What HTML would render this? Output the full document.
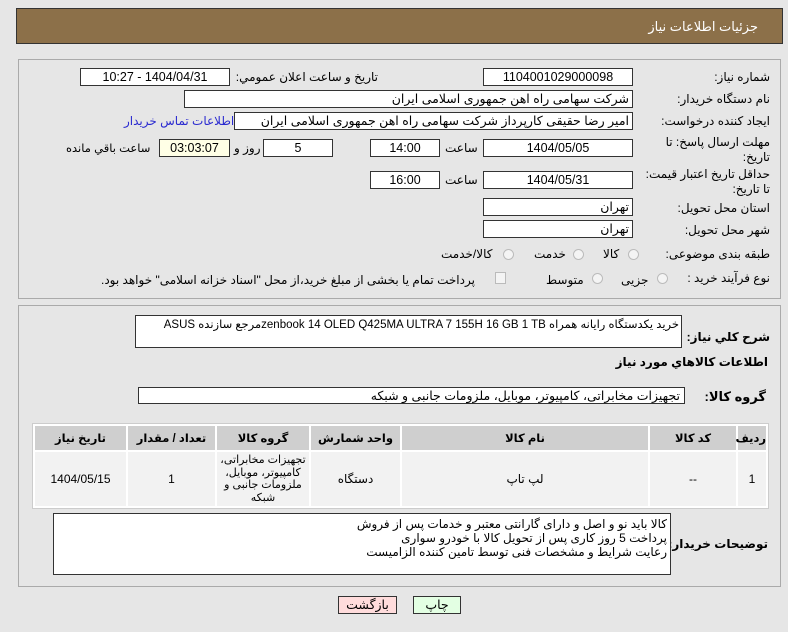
<!DOCTYPE html>
<html><head><meta charset="utf-8"><style>
*{box-sizing:border-box;margin:0;padding:0}
body{width:788px;height:632px;background:#e6e6e6;font-family:"Liberation Sans","DejaVu Sans",sans-serif;font-size:12px;color:#000;position:relative;overflow:hidden;direction:rtl}
.a{position:absolute;white-space:nowrap}
.box{position:absolute;background:#fff;border:1px solid #333;text-align:center;line-height:16px;font-size:12.5px;overflow:hidden;white-space:nowrap}
.lbl{position:absolute;white-space:nowrap;text-align:right;font-size:12px}
.r{position:absolute;width:11px;height:11px;border-radius:50%;border:1px solid #bbb;background:#f4f4f4}
.panel{position:absolute;border:1px solid #aaa;left:18px;width:763px}
table{border-collapse:separate;border-spacing:2px;position:absolute;left:32px;top:423px;width:737px;height:84px;background:#fff;border:1px solid #ccc;table-layout:fixed}
th{background:#cfcfcf;font-weight:bold;height:24px;font-size:11.5px}
td{background:#f2f2f2;text-align:center;height:54px;font-size:12px;overflow:hidden}
</style></head><body>
<div class="a" style="left:16px;top:8px;width:767px;height:36px;background:#8c7049;border:1px solid #333"></div>
<div class="a" style="right:30px;top:19px;color:#fff;font-size:13px">جزئیات اطلاعات نیاز</div>

<div class="panel" style="top:59px;height:240px"></div>
<div class="panel" style="top:305px;height:282px"></div>

<div class="lbl" style="right:18px;top:70px">شماره نیاز:</div>
<div class="box" style="left:483px;top:68px;width:150px;height:18px">1104001029000098</div>
<div class="lbl" style="right:410px;top:70px">تاریخ و ساعت اعلان عمومي:</div>
<div class="box" style="left:80px;top:68px;width:150px;height:18px">1404/04/31 - 10:27</div>

<div class="lbl" style="right:18px;top:92px">نام دستگاه خریدار:</div>
<div class="box" style="left:184px;top:90px;width:449px;height:18px;text-align:right;padding-right:3px">شرکت سهامی راه اهن جمهوری اسلامی ایران</div>

<div class="lbl" style="right:18px;top:114px">ایجاد کننده درخواست:</div>
<div class="box" style="left:234px;top:112px;width:399px;height:18px;text-align:right;padding-right:3px">امیر رضا  حقیقی کارپرداز شرکت سهامی راه اهن جمهوری اسلامی ایران</div>
<div class="a" style="left:124px;top:114px;color:#2a2ad0;font-size:12px">اطلاعات تماس خریدار</div>

<div class="lbl" style="right:18px;top:135px;line-height:15px">مهلت ارسال پاسخ: تا<br>تاریخ:</div>
<div class="box" style="left:483px;top:139px;width:150px;height:18px">1404/05/05</div>
<div class="lbl" style="left:445px;top:141px">ساعت</div>
<div class="box" style="left:370px;top:139px;width:70px;height:18px">14:00</div>
<div class="box" style="left:263px;top:139px;width:70px;height:18px">5</div>
<div class="lbl" style="left:234px;top:141px">روز و</div>
<div class="box" style="left:159px;top:139px;width:71px;height:18px;background:#ffffe6">03:03:07</div>
<div class="lbl" style="left:66px;top:141px;font-size:11.5px">ساعت باقي مانده</div>

<div class="lbl" style="right:18px;top:167px;line-height:15px">حداقل تاریخ اعتبار قیمت:<br>تا تاریخ:</div>
<div class="box" style="left:483px;top:171px;width:150px;height:18px">1404/05/31</div>
<div class="lbl" style="left:445px;top:173px">ساعت</div>
<div class="box" style="left:370px;top:171px;width:70px;height:18px">16:00</div>

<div class="lbl" style="right:18px;top:201px">استان محل تحویل:</div>
<div class="box" style="left:483px;top:198px;width:150px;height:18px;text-align:right;padding-right:3px">تهران</div>
<div class="lbl" style="right:18px;top:223px">شهر محل تحویل:</div>
<div class="box" style="left:483px;top:220px;width:150px;height:18px;text-align:right;padding-right:3px">تهران</div>

<div class="lbl" style="right:18px;top:247px">طبقه بندی موضوعی:</div>
<div class="r" style="left:628px;top:249px"></div><div class="lbl" style="left:603px;top:247px">کالا</div>
<div class="r" style="left:573px;top:249px"></div><div class="lbl" style="left:534px;top:247px">خدمت</div>
<div class="r" style="left:503px;top:249px"></div><div class="lbl" style="left:441px;top:247px">کالا/خدمت</div>

<div class="lbl" style="right:18px;top:271px">نوع فرآیند خرید :</div>
<div class="r" style="left:657px;top:273px"></div><div class="lbl" style="left:621px;top:273px">جزیی</div>
<div class="r" style="left:592px;top:273px"></div><div class="lbl" style="left:546px;top:273px">متوسط</div>
<div class="a" style="left:495px;top:272px;width:11px;height:12px;border:1px solid #bbb;background:#f4f4f4"></div>
<div class="lbl" style="left:101px;top:273px">پرداخت تمام یا بخشی از مبلغ خرید،از محل "اسناد خزانه اسلامی" خواهد بود.</div>

<div class="lbl" style="right:18px;top:330px;font-weight:bold">شرح کلي نیاز:</div>
<div class="box" style="left:135px;top:315px;width:547px;height:33px;text-align:right;padding-right:2px;line-height:18px;font-size:11.5px">خرید یکدستگاه رایانه همراه  zenbook 14 OLED Q425MA ULTRA 7 155H 16 GB 1 TBمرجع سازنده ASUS</div>
<div class="lbl" style="right:20px;top:355px;font-weight:bold">اطلاعات کالاهاي مورد نیاز</div>
<div class="lbl" style="right:22px;top:389px;font-weight:bold;font-size:13px">گروه کالا:</div>
<div class="box" style="left:138px;top:387px;width:547px;height:17px;text-align:right;padding-right:4px">تجهیزات مخابراتی، کامپیوتر، موبایل، ملزومات جانبی و شبکه</div>

<table>
<tr><th style="width:28px">ردیف</th><th style="width:86px">کد کالا</th><th style="width:246px">نام کالا</th><th style="width:89px">واحد شمارش</th><th style="width:92px">گروه کالا</th><th style="width:87px">تعداد / مقدار</th><th>تاریخ نیاز</th></tr>
<tr><td>1</td><td>--</td><td>لپ تاپ</td><td>دستگاه</td><td style="line-height:12.5px;font-size:11px">تجهیزات مخابراتی، کامپیوتر، موبایل، ملزومات جانبی و شبکه</td><td>1</td><td>1404/05/15</td></tr>
</table>

<div class="lbl" style="right:20px;top:537px;font-weight:bold;font-size:12px">توضیحات خریدار:</div>
<div class="box" style="left:53px;top:513px;width:618px;height:62px;text-align:right;padding-right:3px;line-height:14px;font-size:12px;padding-top:3px;white-space:normal">کالا باید نو و اصل و دارای گارانتی معتبر و خدمات پس از فروش<br>پرداخت 5 روز کاری پس از تحویل کالا با خودرو سواری<br>رعایت شرایط و مشخصات فنی توسط تامین کننده الزامیست</div>

<div class="a" style="left:338px;top:596px;width:59px;height:18px;background:#ffdcdc;border:1px solid #333;text-align:center;line-height:16px;font-size:12.5px">بازگشت</div>
<div class="a" style="left:413px;top:596px;width:48px;height:18px;background:#e3ffe3;border:1px solid #333;text-align:center;line-height:16px;font-size:12.5px">چاپ</div>
</body></html>
